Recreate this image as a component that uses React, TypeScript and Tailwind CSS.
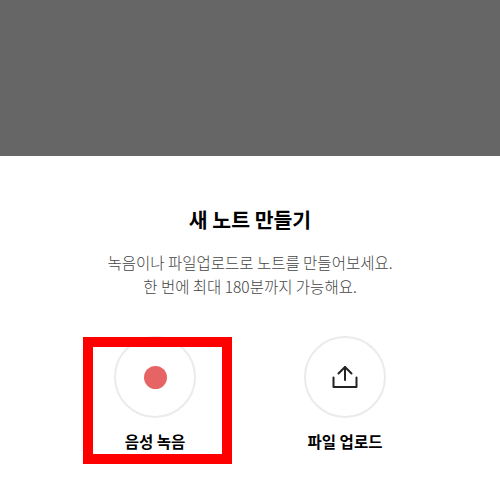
export default function App() {
  return (
    <div className="w-[500px] h-[500px] overflow-hidden bg-white flex flex-col items-center" style={{ fontFamily: '"Noto Sans CJK KR", "Noto Sans", sans-serif' }}>
      <div className="w-full h-[156px] shrink-0 bg-[#666666]" />
      <h1 className="mt-[48px] text-[20.5px] leading-[30px] font-bold text-[#000000] whitespace-nowrap">새 노트 만들기</h1>
      <p className="mt-[16px] text-[15.5px] leading-[24px] font-light text-[#444444] text-center whitespace-nowrap">
        녹음이나 파일업로드로 노트를 만들어보세요.
        <br />
        한 번에 최대 180분까지 가능해요.
      </p>
      <div className="mt-[38px] flex gap-[108px]">
        <div className="relative w-[82px] flex flex-col items-center">
          <div className="w-[82px] h-[82px] shrink-0 rounded-full border-2 border-[#ebebeb] flex items-center justify-center">
            <div className="w-[23px] h-[23px] rounded-full bg-[#e76464]" />
          </div>
          <span className="mt-[8px] text-[15.5px] leading-[30px] font-bold text-[#000000] whitespace-nowrap">음성 녹음</span>
          <div className="absolute left-[-31px] top-[1px] w-[149px] h-[127px] border-[10px] border-[#ff0000]" />
        </div>
        <div className="w-[82px] flex flex-col items-center">
          <div className="w-[82px] h-[82px] shrink-0 rounded-full border-2 border-[#ebebeb] flex items-center justify-center">
            <svg width="28" height="28" viewBox="0 0 28 28" fill="none" stroke="#222222" strokeWidth="2" strokeLinecap="round" strokeLinejoin="round">
              <path d="M14 17V4" />
              <path d="M7.5 10.5L14 4L20.5 10.5" />
              <path d="M2.5 14.5V24H25.5V14.5" />
            </svg>
          </div>
          <span className="mt-[8px] text-[15.5px] leading-[30px] font-bold text-[#000000] whitespace-nowrap">파일 업로드</span>
        </div>
      </div>
    </div>
  );
}
